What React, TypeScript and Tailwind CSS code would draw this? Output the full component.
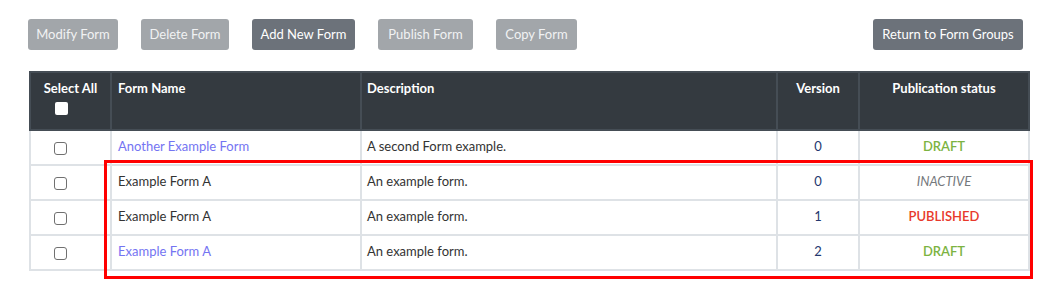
import React from 'react'

type Row = {
  name: string
  link: boolean
  description: string
  version: number
  status: 'DRAFT' | 'INACTIVE' | 'PUBLISHED'
}

const rows: Row[] = [
  { name: 'Another Example Form', link: true, description: 'A second Form example.', version: 0, status: 'DRAFT' },
  { name: 'Example Form A', link: false, description: 'An example form.', version: 0, status: 'INACTIVE' },
  { name: 'Example Form A', link: false, description: 'An example form.', version: 1, status: 'PUBLISHED' },
  { name: 'Example Form A', link: true, description: 'An example form.', version: 2, status: 'DRAFT' },
]

function Btn({ label, active, w }: { label: string; active?: boolean; w: string }) {
  return (
    <button
      className={
        'h-[31px] rounded-[3px] text-[13px] whitespace-nowrap ' +
        w +
        ' ' +
        (active ? 'bg-[#6c727a] text-white' : 'bg-[#a2a6aa] text-[#f1f2f3]')
      }
    >
      {label}
    </button>
  )
}

function Box({ dark }: { dark?: boolean }) {
  return (
    <span
      className={
        'inline-block w-[13px] h-[13px] rounded-[2px] align-middle ' +
        (dark ? 'bg-white' : 'border border-[#707070] bg-white rounded-[3px]')
      }
    />
  )
}

function Status({ s }: { s: Row['status'] }) {
  if (s === 'DRAFT') return <span className="font-semibold text-[#7cb342]">DRAFT</span>
  if (s === 'PUBLISHED') return <span className="font-semibold text-[#e8392b]">PUBLISHED</span>
  return <span className="italic text-[#75797d]">INACTIVE</span>
}

export default function App() {
  return (
    <div
      className="relative w-[1043px] h-[284px] bg-white text-[13px] text-[#333]"
      style={{ fontFamily: 'Lato, "Open Sans", sans-serif' }}
    >
      {/* Toolbar */}
      <div className="flex items-center pt-[19px] pl-[28px] pr-[20px]">
        <div className="flex gap-[23px]">
          <Btn label="Modify Form" w="w-[90px]" />
          <Btn label="Delete Form" w="w-[88px]" />
          <Btn label="Add New Form" w="w-[103px]" active />
          <Btn label="Publish Form" w="w-[95px]" />
          <Btn label="Copy Form" w="w-[81px]" />
        </div>
        <div className="ml-auto">
          <Btn label="Return to Form Groups" w="w-[150px]" active />
        </div>
      </div>

      {/* Table */}
      <table className="mt-[21px] ml-[29px] w-[999px] border-collapse table-fixed">
        <colgroup>
          <col className="w-[81px]" />
          <col className="w-[250px]" />
          <col className="w-[416px]" />
          <col className="w-[82px]" />
          <col className="w-[170px]" />
        </colgroup>
        <thead>
          <tr className="bg-[#343a40] text-white font-bold h-[58px]">
            <th className="border-2 border-[#454d55] align-top pt-[6px] text-center">
              <div>Select All</div>
              <div className="mt-[2px] leading-none text-left pl-[24px]">
                <Box dark />
              </div>
            </th>
            <th className="border-2 border-[#454d55] align-top pt-[6px] pl-[6px] text-left">Form Name</th>
            <th className="border-2 border-[#454d55] align-top pt-[6px] pl-[5px] text-left">Description</th>
            <th className="border-2 border-[#454d55] align-top pt-[6px] text-center">Version</th>
            <th className="border-2 border-[#454d55] align-top pt-[6px] text-center">Publication status</th>
          </tr>
        </thead>
        <tbody>
          {rows.map((r, i) => (
            <tr key={i} className="h-[35px]">
              <td className="border-2 border-[#dee2e6] pl-[23px] leading-none">
                <Box />
              </td>
              <td
                className={
                  'border-2 border-[#dee2e6] pl-[6px] pb-[2px] ' + (r.link ? 'text-[#7474f2]' : 'text-[#333]')
                }
              >
                {r.name}
              </td>
              <td className="border-2 border-[#dee2e6] pl-[5px] pb-[2px]">{r.description}</td>
              <td className="border-2 border-[#dee2e6] pb-[2px] text-center text-[#24386f]">{r.version}</td>
              <td className="border-2 border-[#dee2e6] pb-[2px] text-center">
                <Status s={r.status} />
              </td>
            </tr>
          ))}
        </tbody>
      </table>

      {/* highlight annotation */}
      <div className="absolute left-[104px] top-[160px] w-[929px] h-[119px] border-[3px] border-[#ff0000] pointer-events-none" />
    </div>
  )
}
